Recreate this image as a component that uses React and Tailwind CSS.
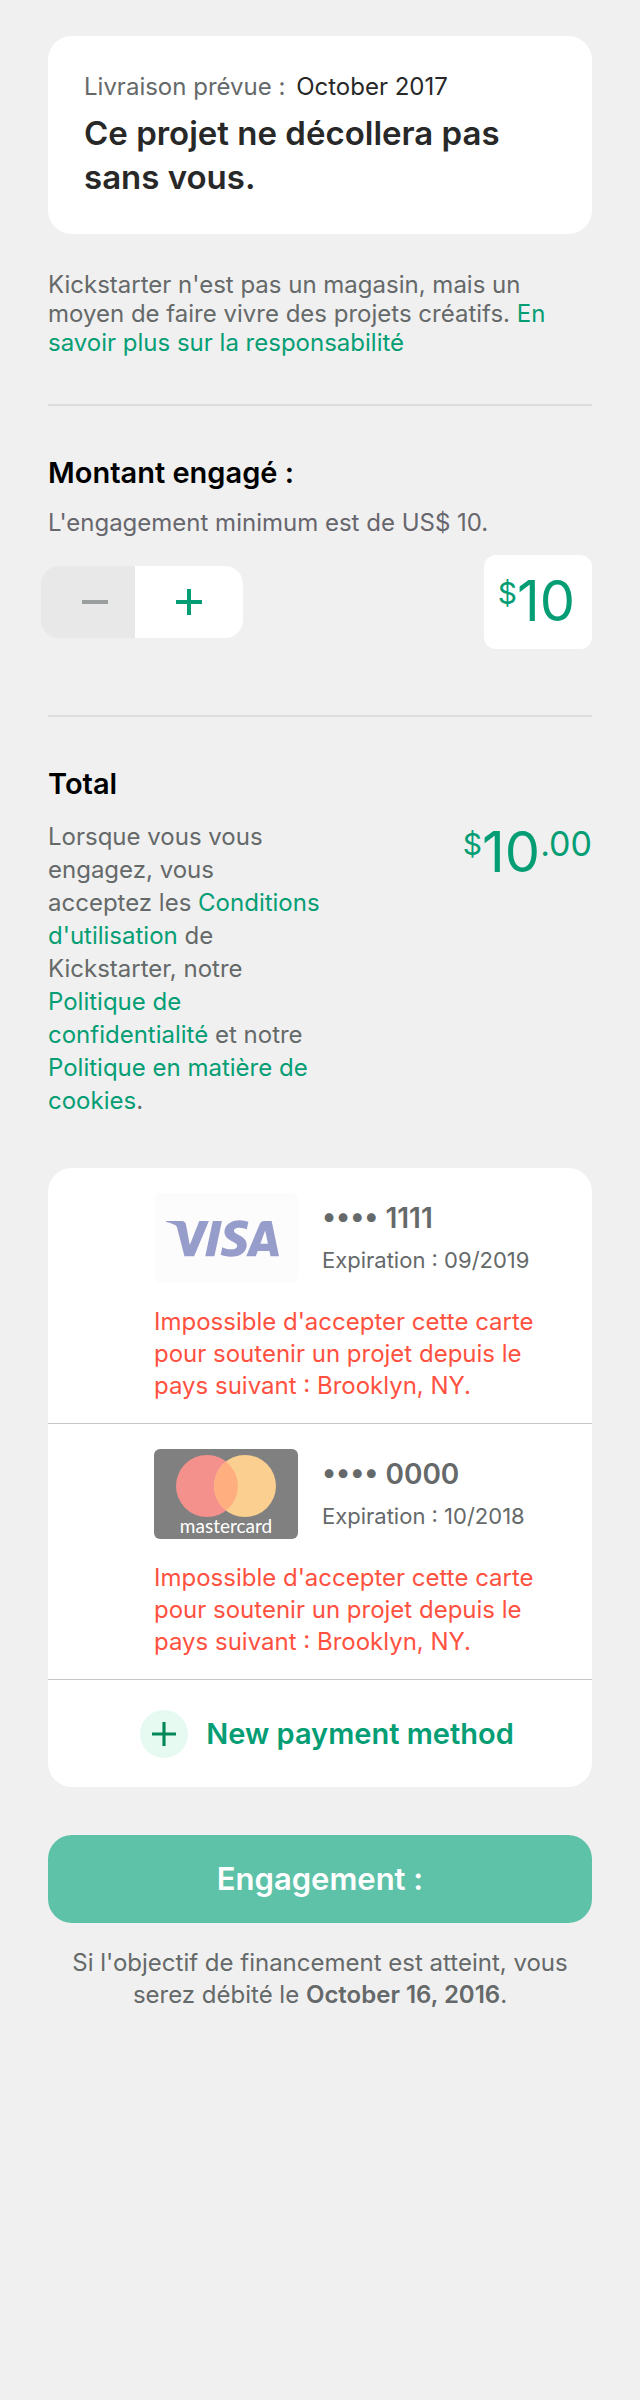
import { SiVisa } from 'react-icons/si';

const linkClass = 'text-[#059e74]';

function PlusIcon({ className, strokeWidth }) {
  return (
    <svg viewBox="0 0 26 26" className={className} fill="none" stroke="currentColor" strokeWidth={strokeWidth} aria-hidden="true">
      <path d="M13 0V26M0 13H26" />
    </svg>
  );
}

function MinusIcon({ className }) {
  return (
    <svg viewBox="0 0 26 26" className={className} fill="none" stroke="currentColor" strokeWidth="4" aria-hidden="true">
      <path d="M0 13H26" />
    </svg>
  );
}

function VisaLogo() {
  return (
    <div className="flex h-[90px] w-36 shrink-0 items-center overflow-hidden rounded-md bg-[#fcfcfc] pl-3">
      <SiVisa className="size-[113px] shrink-0 text-[#979dcb]" aria-label="Visa" />
    </div>
  );
}

function MastercardLogo() {
  return (
    <svg viewBox="0 0 144 90" className="h-[90px] w-36 shrink-0" role="img" aria-label="Mastercard">
      <rect width="144" height="90" rx="6" fill="#808080" />
      <circle cx="53" cy="37" r="31" fill="#f5918d" />
      <circle cx="91" cy="37" r="31" fill="#fbcf8f" />
      <path d="M72 12.5A31 31 0 0 1 72 61.5A31 31 0 0 1 72 12.5Z" fill="#ffae80" />
      <text x="72" y="84" textAnchor="middle" fill="#ffffff" className="font-['Lato',sans-serif] text-[19px]">
        mastercard
      </text>
    </svg>
  );
}

function PaymentCard({ logo, digits, expiration }) {
  return (
    <li className="border-b border-[#c4c6c6] pt-[25px] pr-9 pb-[21px] pl-[106px]">
      <div className="flex gap-6">
        {logo}
        <div className="flex flex-col pt-[7px] text-[#656969]">
          <p className="text-[28px] leading-9 font-semibold">•••• {digits}</p>
          <p className="mt-[10px] text-[22px] leading-7 whitespace-nowrap">Expiration : {expiration}</p>
        </div>
      </div>
      <p className="mt-[23px] text-[24px] leading-8 text-[#ff5140]">
        Impossible d'accepter cette carte
        <br />
        pour soutenir un projet depuis le
        <br />
        pays suivant : Brooklyn, NY.
      </p>
    </li>
  );
}

export default function App() {
  return (
    <main className="min-h-screen bg-[#f0f0f0] px-12 pt-9 pb-12 font-['Inter','Liberation_Sans',sans-serif] text-[24px] text-[#656969]">
      <section className="rounded-3xl bg-white px-9 py-[35px]">
        <p className="leading-8">
          Livraison prévue : <span className="ml-1 text-[#282828]">October 2017</span>
        </p>
        <h1 className="mt-2 text-[33px] leading-[44px] font-semibold text-[#282828]">
          Ce projet ne décollera pas
          <br />
          sans vous.
        </h1>
      </section>

      <p className="mt-9 leading-[29px]">
        Kickstarter n'est pas un magasin, mais un
        <br />
        moyen de faire vivre des projets créatifs.{' '}
        <a href="#responsabilite" className={linkClass}>
          En
          <br />
          savoir plus sur la responsabilité
        </a>
      </p>

      <section className="mt-[47px] border-t-2 border-[#dcdcdc] pt-[49px]">
        <h2 className="text-[29px] leading-9 font-semibold text-black">Montant engagé :</h2>
        <p className="mt-4 leading-8 text-[#67666d]">
          <label htmlFor="amount">L'engagement minimum est de US$ 10.</label>
        </p>
        <div className="mt-4 flex items-center justify-between">
          <div className="-ml-[7px] flex h-[72px] overflow-hidden rounded-[18px]">
            <button type="button" disabled aria-label="Diminuer" className="flex w-[94px] items-center justify-center bg-[#e8e8e8] pl-[14px] text-[#9b9e9e]">
              <MinusIcon className="size-[26px]" />
            </button>
            <button type="button" aria-label="Augmenter" className="flex w-[108px] items-center justify-center bg-white text-[#059e74]">
              <PlusIcon className="size-[26px]" strokeWidth={4} />
            </button>
          </div>
          <div className="flex h-[94px] items-start rounded-xl bg-white pt-[14px] pr-3 pl-[14px] text-[#059e74]">
            <span className="pt-1 text-[30px] leading-10">$</span>
            <input id="amount" type="text" inputMode="numeric" defaultValue="10" className="h-16 w-[63px] bg-transparent p-0 text-[56px] leading-16 outline-none" />
          </div>
        </div>
      </section>

      <section className="mt-[66px] border-t-2 border-[#dcdcdc] pt-[49px]">
        <h2 className="text-[29px] leading-9 font-semibold text-black">Total</h2>
        <div className="mt-[18px] flex items-start justify-between">
          <p className="leading-[33px]">
            Lorsque vous vous
            <br />
            engagez, vous
            <br />
            acceptez les{' '}
            <a href="#conditions" className={linkClass}>
              Conditions
              <br />
              d'utilisation
            </a>{' '}
            de
            <br />
            Kickstarter, notre
            <br />
            <a href="#confidentialite" className={linkClass}>
              Politique de
              <br />
              confidentialité
            </a>{' '}
            et notre
            <br />
            <a href="#cookies" className={linkClass}>
              Politique en matière de
              <br />
              cookies
            </a>
            .
          </p>
          <p className="flex items-start text-[#059e74]">
            <span className="pt-1 text-[30px] leading-10">$</span>
            <span className="text-[56px] leading-16">10</span>
            <span className="pt-1 text-[34px] leading-10">.00</span>
          </p>
        </div>
      </section>

      <section className="mt-[51px] overflow-hidden rounded-3xl bg-white">
        <ul>
          <PaymentCard logo={<VisaLogo />} digits="1111" expiration="09/2019" />
          <PaymentCard logo={<MastercardLogo />} digits="0000" expiration="10/2018" />
        </ul>
        <button type="button" className="flex h-[107px] w-full items-center justify-center gap-[18px] pl-[14px] text-[29px] font-semibold text-[#059e74]">
          <span className="flex size-12 items-center justify-center rounded-full bg-[#e6faf1] text-[#028858]">
            <PlusIcon className="size-6" strokeWidth={3.4} />
          </span>
          New payment method
        </button>
      </section>

      <button type="button" className="mt-12 h-[88px] w-full rounded-3xl bg-[#5ec2a9] text-[31px] font-semibold text-white">
        Engagement :
      </button>
      <p className="mt-6 text-center leading-8">
        Si l'objectif de financement est atteint, vous
        <br />
        serez débité le <strong className="font-semibold">October 16, 2016</strong>.
      </p>
    </main>
  );
}
